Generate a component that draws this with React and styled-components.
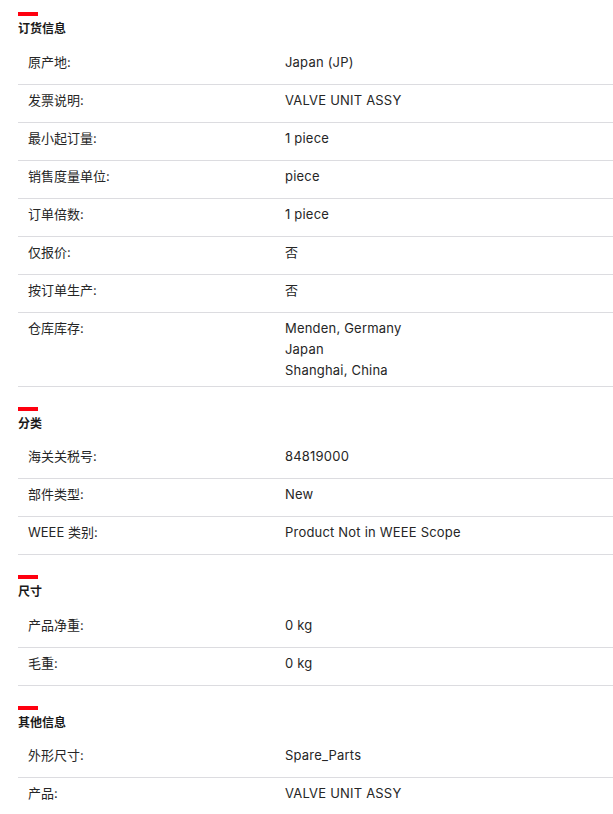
import React from "react";
import styled, { createGlobalStyle } from "styled-components";

const Global = createGlobalStyle`
  html, body { margin: 0; padding: 0; background: #fff; }
  body {
    font-family: Inter, "Noto Sans CJK SC", sans-serif;
    color: #1f1f1f;
  }
`;

const Page = styled.div`
  padding: 12px 0 0 18px;
`;

const Section = styled.section`
  & + & { margin-top: 20px; }
`;

const Bar = styled.div`
  width: 20px;
  height: 4px;
  background: #ff000f;
`;

const Title = styled.h3`
  margin: 3px 0 9.5px;
  font-size: 12px;
  line-height: 18px;
  font-weight: 700;
  color: #1a1a1a;
  font-family: "Noto Sans CJK SC", sans-serif;
`;

const Row = styled.div`
  display: grid;
  grid-template-columns: 267px 1fr;
  box-sizing: border-box;
  min-height: 38px;
  padding: 5px 0 5px;
  border-bottom: 1px solid #dcdce0;
  font-size: 13px;
  line-height: 21px;
`;

const Label = styled.div`
  padding-left: 10px;
  font-family: Inter, "Noto Sans CJK SC", sans-serif;
  color: #262626;
`;

const Value = styled.div`
  font-family: Inter, "Noto Sans CJK SC", sans-serif;
  letter-spacing: 0.2px;
  color: #262626;
`;

const Line = styled.div``;

const sections = [
  {
    title: "订货信息",
    rows: [
      ["原产地:", ["Japan (JP)"]],
      ["发票说明:", ["VALVE UNIT ASSY"]],
      ["最小起订量:", ["1 piece"]],
      ["销售度量单位:", ["piece"]],
      ["订单倍数:", ["1 piece"]],
      ["仅报价:", ["否"]],
      ["按订单生产:", ["否"]],
      ["仓库库存:", ["Menden, Germany", "Japan", "Shanghai, China"]],
    ],
  },
  {
    title: "分类",
    rows: [
      ["海关关税号:", ["84819000"]],
      ["部件类型:", ["New"]],
      ["WEEE 类别:", ["Product Not in WEEE Scope"]],
    ],
  },
  {
    title: "尺寸",
    rows: [
      ["产品净重:", ["0 kg"]],
      ["毛重:", ["0 kg"]],
    ],
  },
  {
    title: "其他信息",
    rows: [
      ["外形尺寸:", ["Spare_Parts"]],
      ["产品:", ["VALVE UNIT ASSY"]],
    ],
  },
];

export default function App() {
  return (
    <>
      <Global />
      <Page>
        {sections.map((s) => (
          <Section key={s.title}>
            <Bar />
            <Title>{s.title}</Title>
            {s.rows.map(([label, values]) => (
              <Row key={label}>
                <Label>{label}</Label>
                <Value>
                  {values.map((v) => (
                    <Line key={v}>{v}</Line>
                  ))}
                </Value>
              </Row>
            ))}
          </Section>
        ))}
      </Page>
    </>
  );
}
